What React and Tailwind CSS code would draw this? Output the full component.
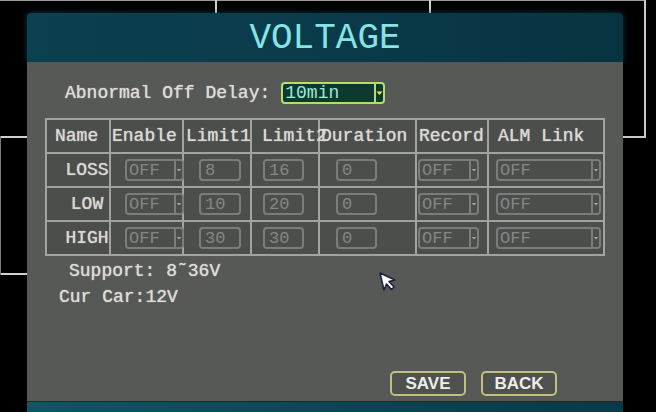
import React from "react";

const MONO = { fontFamily: '"Liberation Mono", "DejaVu Sans Mono", monospace' };
const NARROW = { fontFamily: '"Liberation Sans Narrow", "Arial Narrow", "Liberation Sans", sans-serif' };

function Arrow() {
  return (
    <svg width="8" height="6" viewBox="0 0 8 6" className="block">
      <path d="M1 1.5 L7 1.5 L4 5 Z" fill="#a2a4a1" />
    </svg>
  );
}

function Select({ value, width }) {
  return (
    <div
      className="flex h-[22px] shrink-0 items-stretch rounded-[4px] border-2 border-[#7b7d7a] bg-[#4c4e4b]"
      style={{ width }}
    >
      <div className="flex flex-1 items-center overflow-hidden pl-[2px] text-[17px] leading-none text-[#858784]" style={MONO}>
        {value}
      </div>
      <div className="flex w-[8px] items-center justify-center border-l-2 border-[#7b7d7a]">
        <Arrow />
      </div>
    </div>
  );
}

function Input({ value, width }) {
  return (
    <div
      className="flex h-[22px] shrink-0 items-center rounded-[4px] border-2 border-[#7b7d7a] bg-[#4c4e4b] pl-[4px] text-[17px] leading-none text-[#858784]"
      style={{ width, ...MONO }}
    >
      {value}
    </div>
  );
}

const rows = [
  { name: "LOSS", l1: "8", l2: "16" },
  { name: "LOW", l1: "10", l2: "20" },
  { name: "HIGH", l1: "30", l2: "30" },
];

function HeadCell({ children, pad }) {
  return (
    <div
      className="flex items-center whitespace-nowrap bg-[#4c4e4b] text-[18px] leading-none text-[#d9d9d5] [text-shadow:0_0_1px_#d9d9d5]"
      style={{ paddingLeft: pad, ...MONO }}
    >
      {children}
    </div>
  );
}

function Cell({ children, pad }) {
  return (
    <div className="flex items-center bg-[#4c4e4b]" style={{ paddingLeft: pad }}>
      {children}
    </div>
  );
}

function Table() {
  return (
    <div className="ml-[18px] grid w-[560px] grid-cols-[62px_71px_66px_66px_95px_70px_114px] grid-rows-[32px_32px_32px_32px] gap-[2px] border-2 border-[#a2a4a0] bg-[#a2a4a0]">
      <HeadCell pad={8}>Name</HeadCell>
      <HeadCell pad={1}>Enable</HeadCell>
      <HeadCell pad={2}>Limit1</HeadCell>
      <div className="relative z-10 flex items-center whitespace-nowrap bg-[#4c4e4b] pl-[10px] text-[18px] leading-none text-[#d9d9d5] [text-shadow:0_0_1px_#d9d9d5]" style={MONO}>
        Limit2
      </div>
      <HeadCell pad={1}>Duration</HeadCell>
      <HeadCell pad={2}>Record</HeadCell>
      <HeadCell pad={9}>ALM Link</HeadCell>
      {rows.map((r) => (
        <React.Fragment key={r.name}>
          <div
            className="flex items-center justify-center bg-[#4c4e4b] pl-[18px] text-[18px] leading-none text-[#d9d9d5] [text-shadow:0_0_1px_#d9d9d5]"
            style={MONO}
          >
            {r.name}
          </div>
          <Cell pad={14}>
            <Select value="OFF" width={59} />
          </Cell>
          <Cell pad={15}>
            <Input value={r.l1} width={42} />
          </Cell>
          <Cell pad={11}>
            <Input value={r.l2} width={41} />
          </Cell>
          <Cell pad={16}>
            <Input value="0" width={41} />
          </Cell>
          <Cell pad={1}>
            <Select value="OFF" width={61} />
          </Cell>
          <Cell pad={7}>
            <Select value="OFF" width={105} />
          </Cell>
        </React.Fragment>
      ))}
    </div>
  );
}

function Button({ children }) {
  return (
    <div
      className="flex h-[25px] w-[76px] items-center justify-center rounded-[5px] border-2 border-[#c5bd82] bg-[#4f514e] text-[17px] font-bold leading-none text-[#eeeeea]"
      style={NARROW}
    >
      {children}
    </div>
  );
}

function Cursor() {
  return (
    <svg width="22" height="22" viewBox="0 0 22 22" className="absolute left-[378px] top-[271px]">
      <path
        d="M2 2 L17 9 L11 10.5 L16 16 L13.5 18.5 L8.5 13 L6 19 Z"
        fill="#ffffff"
        stroke="#1a2040"
        strokeWidth="1.5"
        strokeLinejoin="round"
      />
    </svg>
  );
}

export default function App() {
  return (
    <div className="relative h-[412px] w-[656px] overflow-hidden bg-black">
      {/* background multi-view grid lines */}
      <div className="absolute left-0 top-0 h-[1px] w-[646px] bg-[#9a9a9a]" />
      <div className="absolute left-[215px] top-0 h-[14px] w-[2px] bg-[#d0d0d0]" />
      <div className="absolute left-[429px] top-0 h-[14px] w-[2px] bg-[#d0d0d0]" />
      <div className="absolute left-[644px] top-0 h-[138px] w-[2px] bg-[#c8c8c8]" />
      <div className="absolute left-[622px] top-[136px] h-[2px] w-[24px] bg-[#c8c8c8]" />
      <div className="absolute left-0 top-[136px] h-[2px] w-[28px] bg-[#d0d0d0]" />
      <div className="absolute left-0 top-[273px] h-[2px] w-[28px] bg-[#d0d0d0]" />
      <div className="absolute left-0 top-[136px] h-[139px] w-[1px] bg-[#7a7a7a]" />

      {/* dialog */}
      <div className="relative ml-[27px] mt-[13px] flex w-[596px] flex-col">
        <div className="flex h-[49px] items-center justify-center rounded-t-[4px] bg-gradient-to-r from-[#0b4050] via-[#0a3b4a] to-[#073340] shadow-[0_0_6px_rgba(20,90,110,0.6)]">
          <span className="pt-[2px] text-[36px] leading-none text-[#86e4e4]" style={MONO}>
            VOLTAGE
          </span>
        </div>
        <div className="flex h-[340px] flex-col border-b border-[#252725] bg-[#575956]">
          <div className="ml-[38px] mt-[20px] flex h-[22px] items-center">
            <span className="text-[18px] leading-none text-[#dcdcd8] [text-shadow:0_0_1px_#dcdcd8]" style={MONO}>
              Abnormal Off Delay:
            </span>
            <div className="ml-[11px] flex h-[22px] w-[104px] items-stretch rounded-[4px] border-2 border-[#b5dc6e] bg-[#0c3a30]">
              <div className="flex flex-1 items-center pl-[2px] text-[18px] leading-none text-[#9eeadb]" style={MONO}>
                10min
              </div>
              <div className="flex w-[9px] items-center justify-center border-l-2 border-[#b5dc6e]">
                <svg width="7" height="6" viewBox="0 0 7 6" className="block">
                  <path d="M0.5 1.5 L6.5 1.5 L3.5 5 Z" fill="#f2e36a" />
                </svg>
              </div>
            </div>
          </div>
          <div className="mt-[14px]">
            <Table />
          </div>
          <div className="ml-[42px] mt-[6px] h-[18px] text-[18px] leading-[18px] text-[#dcdcd8] [text-shadow:0_0_1px_#dcdcd8]" style={MONO}>
            Support: 8˜36V
          </div>
          <div className="ml-[32px] mt-[8px] h-[18px] text-[18px] leading-[18px] text-[#dcdcd8] [text-shadow:0_0_1px_#dcdcd8]" style={MONO}>
            Cur Car:12V
          </div>
          <div className="flex-1" />
          <div className="mb-[5px] ml-[363px] flex gap-[15px]">
            <Button>SAVE</Button>
            <Button>BACK</Button>
          </div>
        </div>
        <div className="h-[12px] bg-gradient-to-r from-[#0e5566] via-[#0b4656] to-[#083a48]" />
      </div>
      <Cursor />
    </div>
  );
}
